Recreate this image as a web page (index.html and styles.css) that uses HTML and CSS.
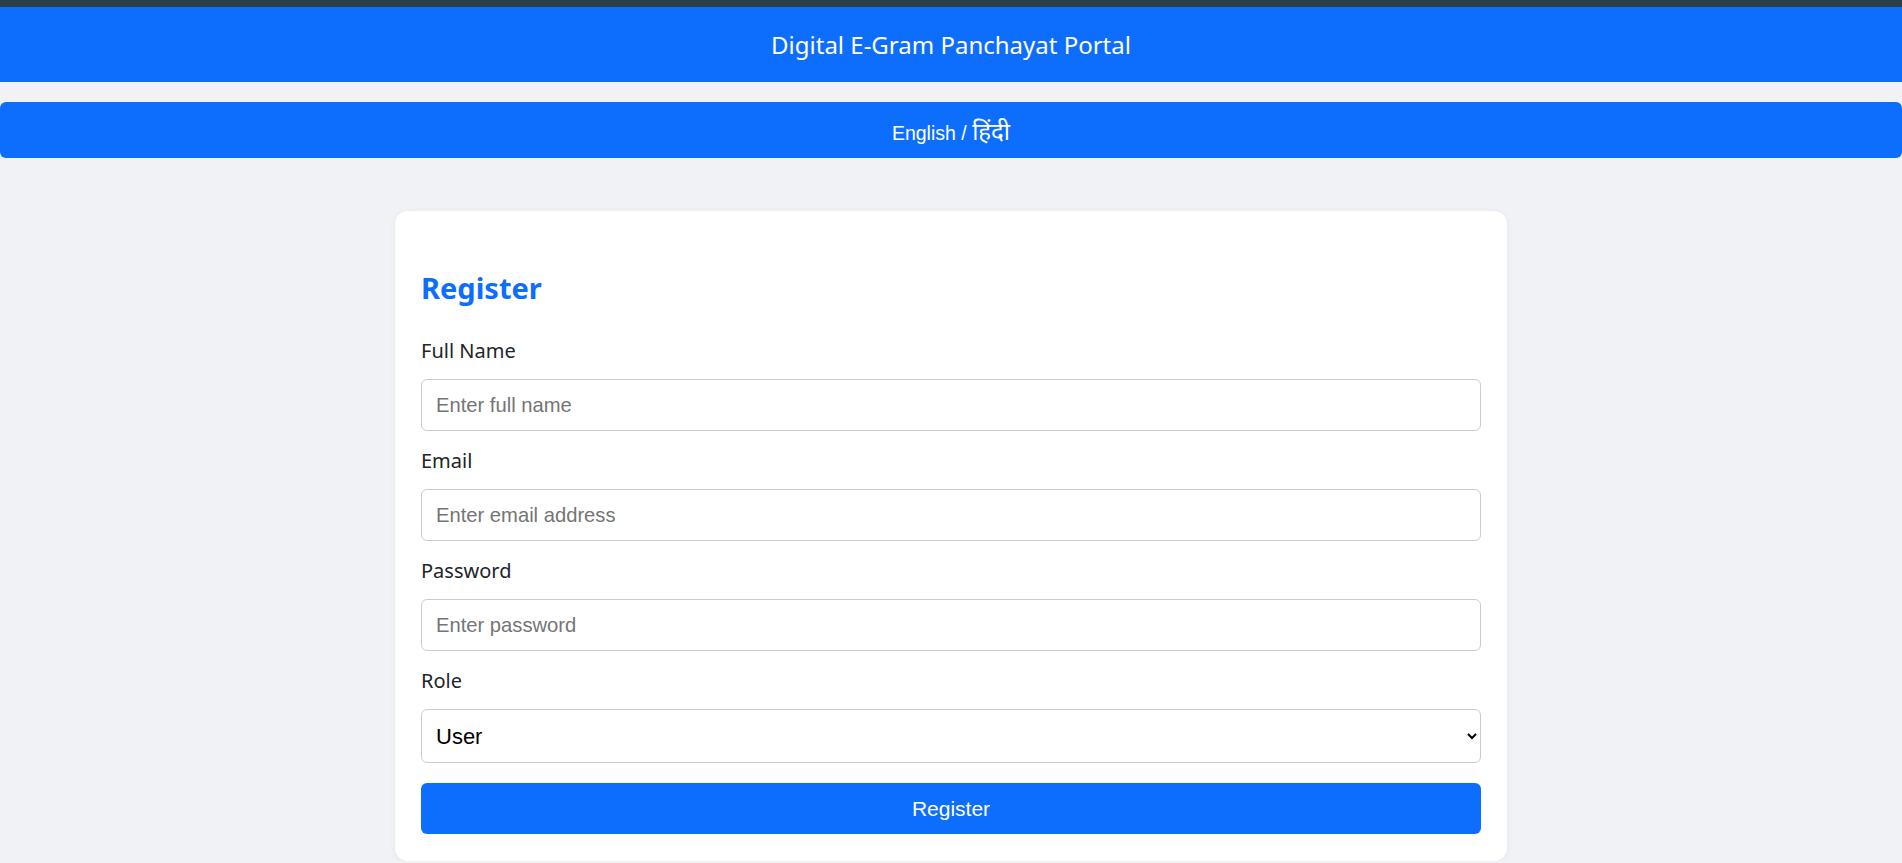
FILE: index.html
```html
<!DOCTYPE html>
<html lang="en">
<head>
<meta charset="utf-8">
<title>Digital E-Gram Panchayat Portal</title>
<link rel="stylesheet" href="styles.css">
</head>
<body>
<div class="topbar"></div>
<header class="site-header">Digital E-Gram Panchayat Portal</header>
<div class="lang-wrap">
  <button class="lang-btn" type="button">English / <span class="hindi">हिंदी</span></button>
</div>
<main class="card">
  <h2 class="card-title">Register</h2>
  <form class="form">
    <div class="field">
      <label class="label" for="name">Full Name</label>
      <input class="control" id="name" type="text" placeholder="Enter full name">
    </div>
    <div class="field">
      <label class="label" for="email">Email</label>
      <input class="control" id="email" type="email" placeholder="Enter email address">
    </div>
    <div class="field">
      <label class="label" for="password">Password</label>
      <input class="control" id="password" type="password" placeholder="Enter password">
    </div>
    <div class="field">
      <label class="label" for="role">Role</label>
      <select class="control select" id="role">
        <option>User</option>
        <option>Staff</option>
        <option>Admin</option>
      </select>
    </div>
    <button class="submit" type="button">Register</button>
  </form>
</main>
</body>
</html>
```

FILE: styles.css
```css
html, body {
  margin: 0;
  padding: 0;
}

body {
  background: #f0f2f5;
  font-family: "Noto Sans", "Open Sans", sans-serif;
  color: #212529;
}

.topbar {
  height: 7px;
  background: #2c3e46;
}

.site-header {
  height: 75px;
  background: #0d6efd;
  color: #fff;
  display: flex;
  align-items: center;
  justify-content: center;
  font-size: 24px;
}

.lang-wrap {
  margin-top: 20px;
}

.lang-btn {
  display: block;
  width: 100%;
  height: 56px;
  border: 0;
  border-radius: 6px;
  background: #0d6efd;
  color: #fff;
  font-family: "Liberation Sans", "Noto Sans Devanagari", "Noto Sans", sans-serif;
  font-size: 19.5px;
  line-height: 24px;
  padding: 4px 0 0;
}

.hindi {
  font-size: 24px;
}

.card {
  width: 1112px;
  box-sizing: border-box;
  margin: 53px auto 0;
  background: #fff;
  border-radius: 13px;
  padding: 26px 26px 27px;
  box-shadow: 0 1px 6px rgba(0, 0, 0, 0.06);
}

.card-title {
  margin: 33px 0 33px;
  font-size: 29px;
  line-height: 36px;
  font-weight: 700;
  color: #0d6efd;
}

.form {
  margin: 0;
}

.field {
  margin-bottom: 18px;
}

.label {
  display: block;
  font-size: 20px;
  line-height: 24px;
  margin-bottom: 16px;
  color: #212529;
}

.control {
  display: block;
  width: 100%;
  box-sizing: border-box;
  height: 52px;
  border: 1px solid #cccccc;
  border-radius: 6px;
  padding: 0 14px;
  font-family: "Liberation Sans", Arial, sans-serif;
  font-size: 20.2px;
  color: #000;
  background: #fff;
}

.control::placeholder {
  color: #757575;
}

.select {
  height: 54px;
  font-size: 22px;
  padding: 0 10px;
}

.submit {
  display: block;
  width: 100%;
  height: 51px;
  margin-top: 20px;
  border: 0;
  border-radius: 6px;
  background: #0d6efd;
  color: #fff;
  font-family: "Liberation Sans", Arial, sans-serif;
  font-size: 21px;
  padding: 0;
}
```
